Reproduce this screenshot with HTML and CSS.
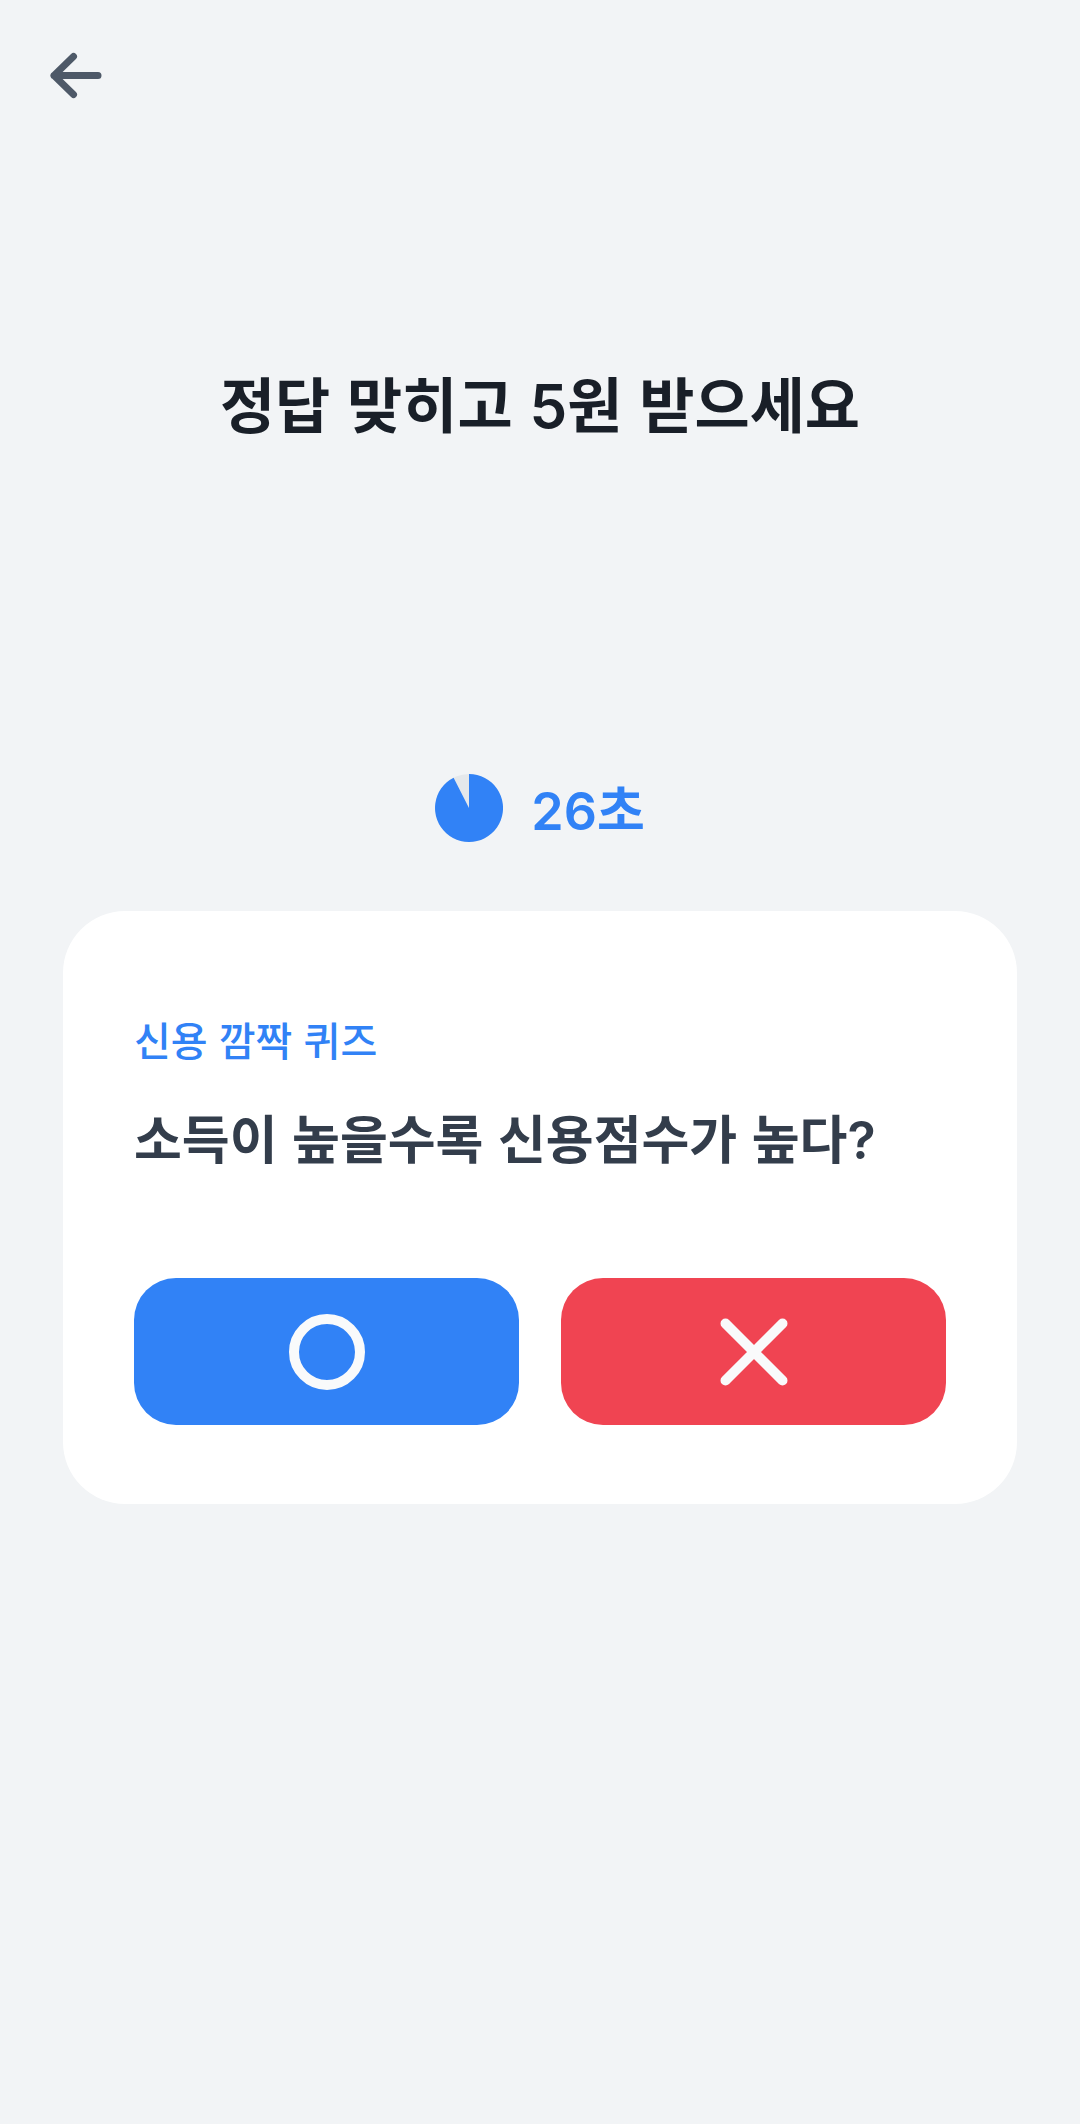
FILE: index.html
```
<!DOCTYPE html>
<html lang="ko">
<head>
  <meta charset="UTF-8">
  <meta name="viewport" content="width=device-width, initial-scale=1">
  <title>신용 깜짝 퀴즈</title>
  <link rel="stylesheet" href="styles.css">
</head>
<body>
  <header class="topBar">
    <button class="backBtn" type="button" aria-label="뒤로">
      <svg width="60" height="60" viewBox="0 0 60 60" aria-hidden="true">
        <path d="M29.5 11.5 L10 30.5 L29.5 49.5 M10 30.5 H54" />
      </svg>
    </button>
  </header>

  <main>
    <h1>정답 맞히고 <span class="num">5</span>원 받으세요</h1>

    <div class="timer">
      <svg class="pie" width="68" height="68" viewBox="0 0 68 68" aria-hidden="true">
        <circle class="pieBase" cx="34" cy="34" r="34" />
        <path class="pieLeft" d="M34 34 V0 A34 34 0 1 1 18.6 3.7 Z" />
      </svg>
      <span><span class="num">26</span>초</span>
    </div>

    <section class="quizCard">
      <p class="quizLabel">신용 깜짝 퀴즈</p>
      <h2>소득이 높을수록 신용점수가 높다<span class="num">?</span></h2>
      <div class="answers">
        <button class="answerBtn yes" type="button" aria-label="맞다">
          <svg width="80" height="80" viewBox="0 0 80 80" aria-hidden="true">
            <circle cx="40" cy="40" r="33" />
          </svg>
        </button>
        <button class="answerBtn no" type="button" aria-label="아니다">
          <svg width="80" height="80" viewBox="0 0 80 80" aria-hidden="true">
            <path d="M11.5 11.5 L68.5 68.5 M68.5 11.5 L11.5 68.5" />
          </svg>
        </button>
      </div>
    </section>
  </main>
</body>
</html>
```

FILE: styles.css
```
* {
  box-sizing: border-box;
}

body {
  margin: 0;
  min-height: 100vh;
  background: #f2f4f6;
  color: #191f28;
  font-family: "Noto Sans CJK KR", sans-serif;
}

h1, h2, p {
  margin: 0;
}

button {
  display: flex;
  align-items: center;
  justify-content: center;
  padding: 0;
  border: none;
  cursor: pointer;
}

svg {
  display: block;
  fill: none;
  stroke-linecap: round;
  stroke-linejoin: round;
}

.num {
  font-family: Inter, sans-serif;
  font-weight: 600;
  line-height: 1;
}

.topBar {
  display: flex;
  align-items: center;
  height: 150px;
  padding: 0 44px;
}

.backBtn {
  background: none;
  stroke: #4e5968;
  stroke-width: 7;
}

h1 {
  margin-top: 208px;
  text-align: center;
  font-size: 60px;
  line-height: 88px;
  font-weight: 700;
}

.timer {
  display: flex;
  align-items: center;
  justify-content: center;
  gap: 28px;
  margin: 322px 0 63px;
  color: #3182f6;
  font-size: 52px;
  line-height: 80px;
  font-weight: 700;
}

.pieBase {
  fill: #e5e8eb;
}

.pieLeft {
  fill: #3182f6;
}

.quizCard {
  margin: 0 63px;
  padding: 98px 71px 79px;
  border-radius: 62px;
  background: #fff;
}

.quizLabel {
  color: #3182f6;
  font-size: 40px;
  line-height: 60px;
  font-weight: 500;
}

h2 {
  margin: 28px 0 101px;
  color: #333d4b;
  font-size: 52px;
  line-height: 80px;
  font-weight: 700;
}

.answers {
  display: grid;
  grid-template-columns: 1fr 1fr;
  gap: 42px;
}

.answerBtn {
  height: 147px;
  border-radius: 42px;
  stroke: #f9fafb;
  stroke-width: 10;
}

.yes {
  background: #3182f6;
}

.no {
  background: #f04452;
}
```
